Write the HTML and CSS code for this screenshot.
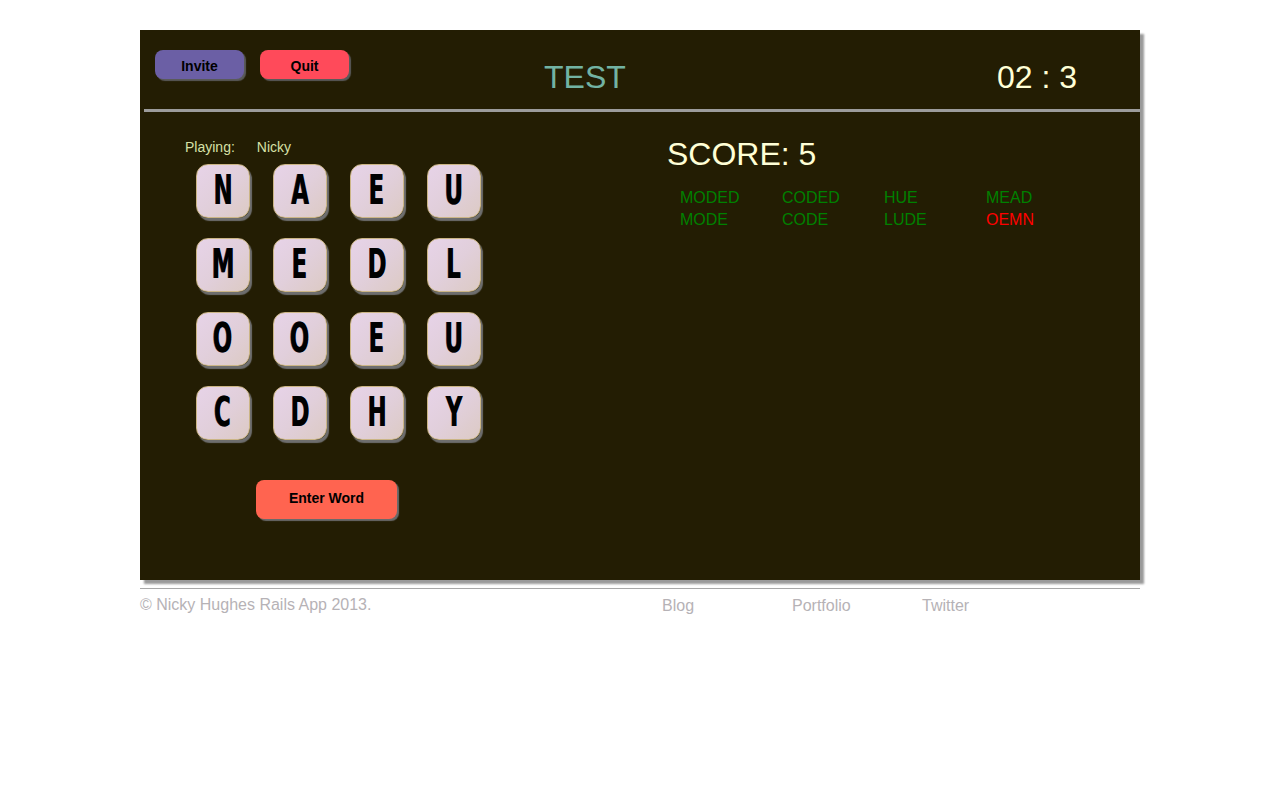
FILE: index.html
```html
<!DOCTYPE html>
<html>
<head>
<meta charset="utf-8">
<title>Word Game</title>
<link rel="stylesheet" href="styles.css">
</head>
<body>
<div class="page">
  <div class="board">
    <div class="header">
      <div class="actions">
        <button class="btn btn-invite">Invite</button>
        <button class="btn btn-quit">Quit</button>
      </div>
      <div class="title">TEST</div>
      <div class="timer">02 : 3</div>
    </div>
    <div class="content">
      <div class="left">
        <div class="playing"><span>Playing:</span><span class="player">Nicky</span></div>
        <div class="tiles">
          <div class="tile"><span>N</span></div>
          <div class="tile"><span>A</span></div>
          <div class="tile"><span>E</span></div>
          <div class="tile"><span>U</span></div>
          <div class="tile"><span>M</span></div>
          <div class="tile"><span>E</span></div>
          <div class="tile"><span>D</span></div>
          <div class="tile"><span>L</span></div>
          <div class="tile"><span>O</span></div>
          <div class="tile"><span>O</span></div>
          <div class="tile"><span>E</span></div>
          <div class="tile"><span>U</span></div>
          <div class="tile"><span>C</span></div>
          <div class="tile"><span>D</span></div>
          <div class="tile"><span>H</span></div>
          <div class="tile"><span>Y</span></div>
        </div>
        <button class="btn btn-enter">Enter Word</button>
      </div>
      <div class="right">
        <div class="score">SCORE: 5</div>
        <div class="words">
          <span class="ok">MODED</span>
          <span class="ok">CODED</span>
          <span class="ok">HUE</span>
          <span class="ok">MEAD</span>
          <span class="ok">MODE</span>
          <span class="ok">CODE</span>
          <span class="ok">LUDE</span>
          <span class="bad">OEMN</span>
        </div>
      </div>
    </div>
  </div>
  <div class="footer">
    <div class="copy">&copy; Nicky Hughes Rails App 2013.</div>
    <a class="flink">Blog</a>
    <a class="flink">Portfolio</a>
    <a class="flink">Twitter</a>
  </div>
</div>
</body>
</html>
```

FILE: styles.css
```css
html, body {
  margin: 0;
  padding: 0;
  background: #ffffff;
  font-family: "Liberation Sans", Arial, Helvetica, sans-serif;
}

.page {
  width: 1000px;
  margin: 30px auto 0;
}

.board {
  height: 550px;
  background: #231d03;
  box-shadow: 4px 4px 2px #9a9a9a;
  display: flex;
  flex-direction: column;
}

.header {
  height: 79px;
  margin-left: 4px;
  border-bottom: 3px solid #9c9c9c;
  display: grid;
  grid-template-columns: 400px 453px 1fr;
  align-items: start;
}

.actions {
  display: flex;
  gap: 16px;
  padding: 20px 0 0 11px;
}

.btn {
  font-family: "Liberation Sans", Arial, sans-serif;
  font-weight: bold;
  font-size: 14px;
  color: #000;
  border: none;
  border-radius: 8px;
  padding: 0;
  box-shadow: 2px 2px 1px #5a5a5a;
}

.btn-invite {
  width: 89px;
  height: 29px;
  padding-top: 2px;
  background: #6b5fa5;
}

.btn-quit {
  width: 89px;
  height: 29px;
  padding-top: 2px;
  background: #ff4a5a;
}

.title {
  margin-top: 29px;
  font-size: 32px;
  color: #72b3a3;
  line-height: 37px;
}

.timer {
  margin-top: 29px;
  font-size: 32px;
  line-height: 37px;
  color: #ffffd6;
}

.content {
  display: grid;
  grid-template-columns: 527px 1fr;
}

.left {
  padding: 27px 0 0 45px;
}

.playing {
  font-size: 14px;
  line-height: 16px;
  color: #d6e0a6;
}

.player {
  margin-left: 22px;
}

.tiles {
  display: grid;
  grid-template-columns: repeat(4, 54px);
  column-gap: 23px;
  row-gap: 20px;
  margin: 9px 0 0 11px;
}

.tile {
  width: 52px;
  height: 52px;
  border: 1px solid #cbb585;
  border-radius: 12px;
  background: linear-gradient(135deg, #e7d3e8 0%, #e1cfdb 50%, #dccac4 100%);
  box-shadow: 2px 3px 1px #6e6e6e;
  display: flex;
  align-items: center;
  justify-content: center;
  overflow: hidden;
}

.tile span {
  font-family: "DejaVu Sans Condensed", "DejaVu Sans", sans-serif;
  font-weight: bold;
  font-size: 41px;
  line-height: 1;
  color: #000;
  transform: scaleX(0.62);
  text-shadow: -1px 0 0 #1d2a4a;
  margin-top: -2px;
}

.btn-enter {
  display: block;
  width: 141px;
  height: 39px;
  padding-bottom: 3px;
  margin: 40px 0 0 71px;
  background: #ff6450;
  box-shadow: 2px 2px 1px #6a6a6a;
}

.right {
  padding: 24px 0 0 0;
}

.score {
  font-size: 32px;
  line-height: 37px;
  color: #ffffd6;
}

.words {
  margin: 14px 0 0 13px;
  display: grid;
  grid-template-columns: repeat(4, 102px);
  font-size: 16px;
  line-height: 22px;
}

.ok {
  color: #008000;
}

.bad {
  color: #ff0000;
}

.footer {
  margin-top: 8px;
  border-top: 1px solid #a8a8a8;
  padding-top: 7px;
  display: grid;
  grid-template-columns: 522px 130px 130px 1fr;
  font-size: 16px;
  line-height: 18px;
  color: #b6b2b6;
}

.flink {
  color: #b6b2b6;
  text-decoration: none;
  padding-top: 1px;
}
```
